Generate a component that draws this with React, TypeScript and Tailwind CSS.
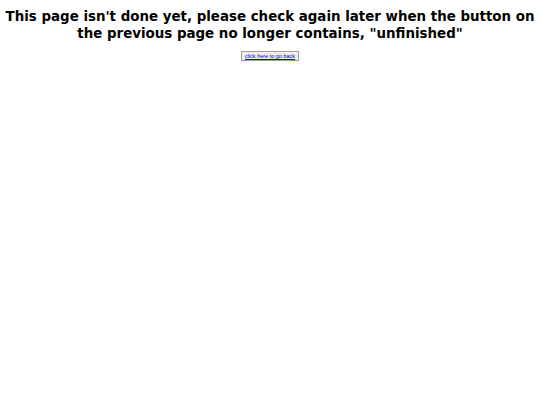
export default function App() {
  return (
    <div className="w-[540px] h-[405px] bg-white text-center" style={{ fontFamily: '"DejaVu Sans", sans-serif' }}>
      <h1 className="pt-[9px] text-[13.4px] leading-[16.5px] font-bold text-black">
        This page isn't done yet, please check again later when the button on the previous page no longer contains, "unfinished"
      </h1>
      <div className="mt-[9px] flex justify-center">
        <button className="h-[10px] px-[3px] border border-[#a0a0a0] bg-[#eeeeee] text-[5.5px] leading-[8px] text-[#0000ee] underline" style={{ fontFamily: '"Liberation Sans", sans-serif' }}>
          click here to go back
        </button>
      </div>
    </div>
  );
}
